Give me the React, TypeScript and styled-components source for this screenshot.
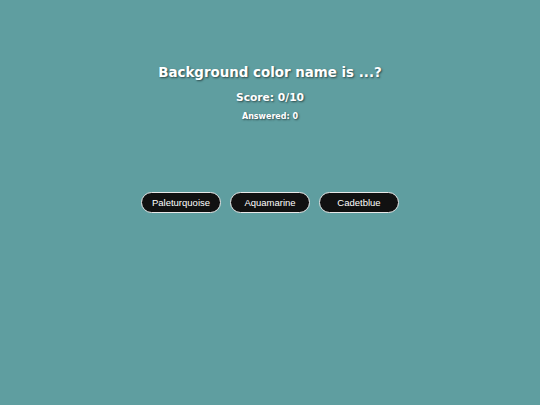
import React from "react";
import styled, { createGlobalStyle } from "styled-components";

const Global = createGlobalStyle`
  html, body { margin: 0; padding: 0; background: #5f9ea0; }
  body { font-family: "DejaVu Sans", Verdana, sans-serif; }
`;

const Page = styled.div`
  width: 540px;
  height: 405px;
  background: #5f9ea0;
  display: flex;
  flex-direction: column;
  align-items: center;
  padding-top: 64px;
  box-sizing: border-box;
`;

const Title = styled.h1`
  margin: 0;
  font-family: "DejaVu Sans", Verdana, sans-serif;
  font-weight: bold;
  font-size: 13.4px;
  line-height: 18px;
  color: #fff;
  text-shadow: 1px 1px 2px rgba(0, 0, 0, 0.55);
`;

const Score = styled.div`
  margin-top: 9px;
  font-family: "DejaVu Sans", Verdana, sans-serif;
  font-weight: bold;
  font-size: 10.7px;
  line-height: 14px;
  color: #fff;
  text-shadow: 1px 1px 2px rgba(0, 0, 0, 0.55);
`;

const Answered = styled.div`
  margin-top: 7px;
  font-family: "DejaVu Sans", Verdana, sans-serif;
  font-weight: bold;
  font-size: 8px;
  line-height: 10px;
  color: #fff;
  text-shadow: 1px 1px 2px rgba(0, 0, 0, 0.55);
`;

const Options = styled.div`
  display: flex;
  gap: 9px;
  margin-top: 70px;
`;

const Option = styled.button`
  width: 80px;
  height: 21px;
  box-sizing: border-box;
  border-radius: 11px;
  border: 1px solid #e8e8e8;
  background: #111;
  color: #fff;
  font-family: "Liberation Sans", Arial, sans-serif;
  font-size: 9.5px;
  padding: 0;
  cursor: pointer;
`;

export default function App() {
  const options = ["Paleturquoise", "Aquamarine", "Cadetblue"];
  return (
    <>
      <Global />
      <Page>
        <Title>Background color name is ...?</Title>
        <Score>Score: 0/10</Score>
        <Answered>Answered: 0</Answered>
        <Options>
          {options.map((o) => (
            <Option key={o}>{o}</Option>
          ))}
        </Options>
      </Page>
    </>
  );
}
